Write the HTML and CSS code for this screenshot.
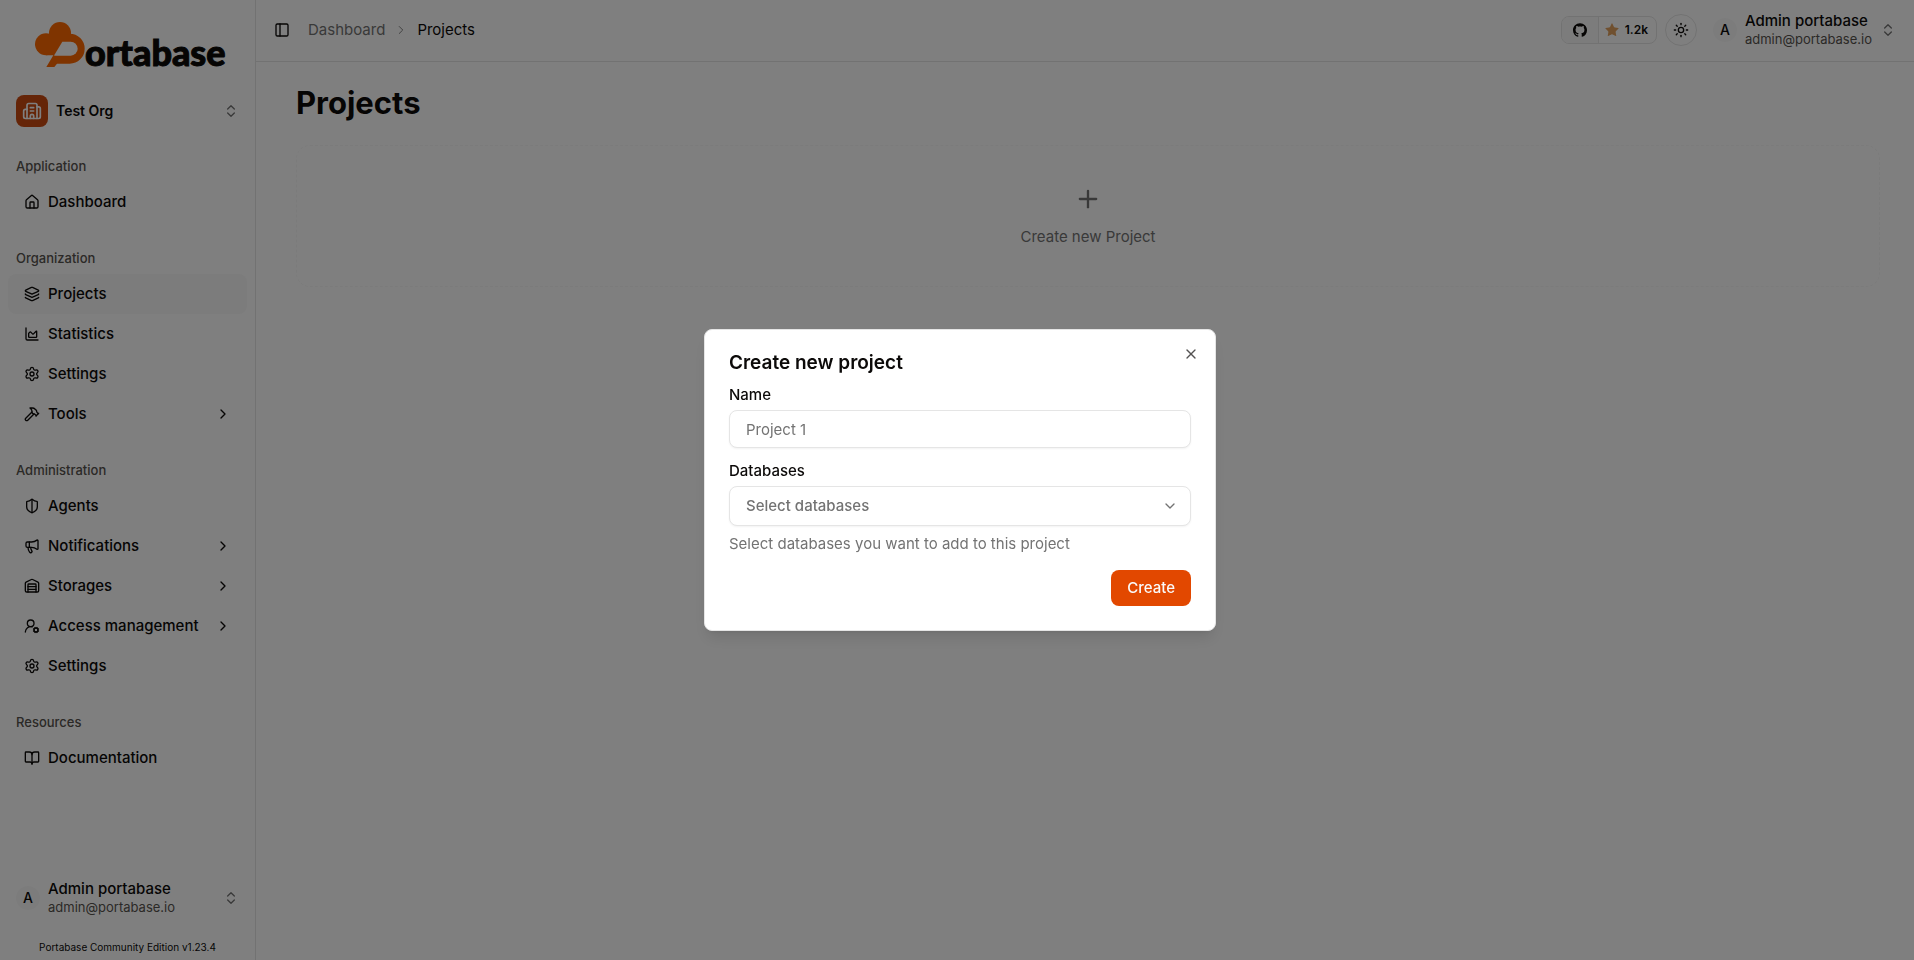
FILE: index.html
```
<!DOCTYPE html>
<html lang="en">
<head>
    <meta charset="UTF-8">
    <meta name="viewport" content="width=device-width, initial-scale=1.0">
    <title>Projects - Portabase</title>
    <link rel="stylesheet" href="styles.css">
</head>
<body>
    <!-- icon sprite -->
    <svg class="sprite" aria-hidden="true">
        <symbol id="i-house" viewBox="0 0 24 24"><path d="M15 21v-8a1 1 0 0 0-1-1h-4a1 1 0 0 0-1 1v8"/><path d="M3 10a2 2 0 0 1 .709-1.528l7-6a2 2 0 0 1 2.582 0l7 6A2 2 0 0 1 21 10v9a2 2 0 0 1-2 2H5a2 2 0 0 1-2-2z"/></symbol>
        <symbol id="i-layers" viewBox="0 0 24 24"><path d="M12.83 2.18a2 2 0 0 0-1.66 0L2.6 6.08a1 1 0 0 0 0 1.83l8.58 3.91a2 2 0 0 0 1.66 0l8.58-3.9a1 1 0 0 0 0-1.83z"/><path d="M2 12a1 1 0 0 0 .58.91l8.6 3.91a2 2 0 0 0 1.65 0l8.58-3.9A1 1 0 0 0 22 12"/><path d="M2 17a1 1 0 0 0 .58.91l8.6 3.91a2 2 0 0 0 1.65 0l8.58-3.9A1 1 0 0 0 22 17"/></symbol>
        <symbol id="i-chart" viewBox="0 0 24 24"><path d="M3 3v16a2 2 0 0 0 2 2h16"/><path d="M7 11.207a.5.5 0 0 1 .146-.353l2-2a.5.5 0 0 1 .708 0l3.292 3.292a.5.5 0 0 0 .708 0l4.292-4.292a.5.5 0 0 1 .854.353V16a1 1 0 0 1-1 1H8a1 1 0 0 1-1-1z"/></symbol>
        <symbol id="i-settings" viewBox="0 0 24 24"><path d="M9.671 4.136a2.34 2.34 0 0 1 4.659 0 2.34 2.34 0 0 0 3.319 1.915 2.34 2.34 0 0 1 2.33 4.033 2.34 2.34 0 0 0 0 3.831 2.34 2.34 0 0 1-2.33 4.033 2.34 2.34 0 0 0-3.319 1.915 2.34 2.34 0 0 1-4.659 0 2.34 2.34 0 0 0-3.32-1.915 2.34 2.34 0 0 1-2.33-4.033 2.34 2.34 0 0 0 0-3.831A2.34 2.34 0 0 1 6.35 6.051a2.34 2.34 0 0 0 3.319-1.915"/><circle cx="12" cy="12" r="3"/></symbol>
        <symbol id="i-hammer" viewBox="0 0 24 24"><path d="m15 12-9.373 9.373a1 1 0 0 1-3.001-3L12 9"/><path d="m18 15 4-4"/><path d="m21.5 11.5-1.914-1.914A2 2 0 0 1 19 8.172v-.344a2 2 0 0 0-.586-1.414l-1.657-1.657A6 6 0 0 0 12.516 3H9l1.243 1.243A6 6 0 0 1 12 8.485V10l2 2h1.172a2 2 0 0 1 1.414.586L18.5 14.5"/></symbol>
        <symbol id="i-shield" viewBox="0 0 24 24"><path d="M20 13c0 5-3.5 7.5-7.66 8.95a1 1 0 0 1-.67-.01C7.5 20.5 4 18 4 13V6a1 1 0 0 1 1-1c2 0 4.5-1.2 6.24-2.72a1.17 1.17 0 0 1 1.52 0C14.51 3.81 17 5 19 5a1 1 0 0 1 1 1z"/><path d="M12 22V2"/></symbol>
        <symbol id="i-megaphone" viewBox="0 0 24 24"><path d="M11 6a13 13 0 0 0 8.4-2.8A1 1 0 0 1 21 4v12a1 1 0 0 1-1.6.8A13 13 0 0 0 11 14H5a2 2 0 0 1-2-2V8a2 2 0 0 1 2-2z"/><path d="M6 14a12 12 0 0 0 2.4 7.2 2 2 0 0 0 3.2-2.4A8 8 0 0 1 10 14"/><path d="M8 6v8"/></symbol>
        <symbol id="i-warehouse" viewBox="0 0 24 24"><path d="M18 21V10a1 1 0 0 0-1-1H7a1 1 0 0 0-1 1v11"/><path d="M22 19a2 2 0 0 1-2 2H4a2 2 0 0 1-2-2V8a2 2 0 0 1 1.132-1.803l7.95-3.974a2 2 0 0 1 1.837 0l7.948 3.974A2 2 0 0 1 22 8z"/><path d="M6 13h12"/><path d="M6 17h12"/></symbol>
        <symbol id="i-user-cog" viewBox="0 0 24 24"><path d="m14.305 19.53.923-.382"/><path d="m15.228 16.852-.923-.383"/><path d="m16.852 15.228-.383-.923"/><path d="m16.852 20.772-.383.924"/><path d="m19.148 15.228.383-.923"/><path d="m19.53 21.696-.382-.924"/><path d="m20.772 16.852.924-.383"/><path d="m20.772 19.148.924.383"/><path d="M2 21a8 8 0 0 1 10.434-7.62"/><circle cx="10" cy="8" r="5"/><circle cx="18" cy="18" r="3"/></symbol>
        <symbol id="i-book" viewBox="0 0 24 24"><path d="M12 7v14"/><path d="M3 18a1 1 0 0 1-1-1V4a1 1 0 0 1 1-1h5a4 4 0 0 1 4 4 4 4 0 0 1 4-4h5a1 1 0 0 1 1 1v13a1 1 0 0 1-1 1h-6a3 3 0 0 0-3 3 3 3 0 0 0-3-3z"/></symbol>
        <symbol id="i-building" viewBox="0 0 24 24"><path d="M10 12h4"/><path d="M10 8h4"/><path d="M14 21v-3a2 2 0 0 0-4 0v3"/><path d="M6 10H4a2 2 0 0 0-2 2v7a2 2 0 0 0 2 2h16a2 2 0 0 0 2-2V9a2 2 0 0 0-2-2h-2"/><path d="M6 21V5a2 2 0 0 1 2-2h8a2 2 0 0 1 2 2v16"/></symbol>
        <symbol id="i-updown" viewBox="0 0 24 24"><path d="m7 15 5 5 5-5"/><path d="m7 9 5-5 5 5"/></symbol>
        <symbol id="i-right" viewBox="0 0 24 24"><path d="m9 18 6-6-6-6"/></symbol>
        <symbol id="i-down" viewBox="0 0 24 24"><path d="m6 9 6 6 6-6"/></symbol>
        <symbol id="i-panel" viewBox="0 0 24 24"><rect width="18" height="18" x="3" y="3" rx="2"/><path d="M9 3v18"/></symbol>
        <symbol id="i-sun" viewBox="0 0 24 24"><circle cx="12" cy="12" r="4"/><path d="M12 2v2"/><path d="M12 20v2"/><path d="m4.93 4.93 1.41 1.41"/><path d="m17.66 17.66 1.41 1.41"/><path d="M2 12h2"/><path d="M20 12h2"/><path d="m6.34 17.66-1.41 1.41"/><path d="m19.07 4.93-1.41 1.41"/></symbol>
        <symbol id="i-plus" viewBox="0 0 24 24"><path d="M5 12h14"/><path d="M12 5v14"/></symbol>
        <symbol id="i-x" viewBox="0 0 24 24"><path d="M18 6 6 18"/><path d="m6 6 12 12"/></symbol>
        <symbol id="i-github" viewBox="0 0 24 24"><path d="M12 .297c-6.63 0-12 5.373-12 12 0 5.303 3.438 9.8 8.205 11.385.6.113.82-.258.82-.577 0-.285-.01-1.04-.015-2.04-3.338.724-4.042-1.61-4.042-1.61C4.422 18.07 3.633 17.7 3.633 17.7c-1.087-.744.084-.729.084-.729 1.205.084 1.838 1.236 1.838 1.236 1.07 1.835 2.809 1.305 3.495.998.108-.776.417-1.305.76-1.605-2.665-.3-5.466-1.332-5.466-5.93 0-1.31.465-2.38 1.235-3.22-.135-.303-.54-1.523.105-3.176 0 0 1.005-.322 3.3 1.23.96-.267 1.98-.399 3-.405 1.02.006 2.04.138 3 .405 2.28-1.552 3.285-1.23 3.285-1.23.645 1.653.24 2.873.12 3.176.765.84 1.23 1.91 1.23 3.22 0 4.61-2.805 5.625-5.475 5.92.42.36.81 1.096.81 2.22 0 1.606-.015 2.896-.015 3.286 0 .315.21.69.825.57C20.565 22.092 24 17.592 24 12.297c0-6.627-5.373-12-12-12"/></symbol>
        <symbol id="i-star" viewBox="0 0 24 24"><path d="M11.525 2.295a.53.53 0 0 1 .95 0l2.31 4.679a2.12 2.12 0 0 0 1.595 1.16l5.166.756a.53.53 0 0 1 .294.904l-3.736 3.638a2.12 2.12 0 0 0-.611 1.878l.882 5.14a.53.53 0 0 1-.771.56l-4.618-2.428a2.12 2.12 0 0 0-1.973 0L6.396 21.01a.53.53 0 0 1-.77-.56l.881-5.139a2.12 2.12 0 0 0-.611-1.879L2.16 9.795a.53.53 0 0 1 .294-.906l5.165-.755a2.12 2.12 0 0 0 1.597-1.16z"/></symbol>
    </svg>

    <div class="app">
        <aside class="sidebar">
            <a class="logo" href="#" aria-label="Portabase">
                <svg class="logo-mark" viewBox="0 0 150 135">
                    <circle cx="75" cy="33" r="33"/>
                    <circle cx="33" cy="67" r="33"/>
                    <path d="M33 100H55L34 135H58L66 125H104A45 45 0 0 0 104 35H75L33 67Z"/>
                    <path class="logo-hole" d="M58 99L82 59H107A20 20 0 0 1 107 101H58Z"/>
                </svg>
                <span class="logo-text">ortabase</span>
            </a>

            <button class="org" type="button">
                <span class="org-icon"><svg class="icon"><use href="#i-building"/></svg></span>
                <span class="org-name">Test Org</span>
                <svg class="icon muted"><use href="#i-updown"/></svg>
            </button>

            <nav class="menu">
                <section class="group">
                    <h2 class="group-label">Application</h2>
                    <a class="item" href="#"><svg class="icon"><use href="#i-house"/></svg>Dashboard</a>
                </section>
                <section class="group">
                    <h2 class="group-label">Organization</h2>
                    <a class="item active" href="#"><svg class="icon"><use href="#i-layers"/></svg>Projects</a>
                    <a class="item" href="#"><svg class="icon"><use href="#i-chart"/></svg>Statistics</a>
                    <a class="item" href="#"><svg class="icon"><use href="#i-settings"/></svg>Settings</a>
                    <button class="item" type="button"><svg class="icon"><use href="#i-hammer"/></svg>Tools<svg class="icon caret"><use href="#i-right"/></svg></button>
                </section>
                <section class="group">
                    <h2 class="group-label">Administration</h2>
                    <a class="item" href="#"><svg class="icon"><use href="#i-shield"/></svg>Agents</a>
                    <button class="item" type="button"><svg class="icon"><use href="#i-megaphone"/></svg>Notifications<svg class="icon caret"><use href="#i-right"/></svg></button>
                    <button class="item" type="button"><svg class="icon"><use href="#i-warehouse"/></svg>Storages<svg class="icon caret"><use href="#i-right"/></svg></button>
                    <button class="item" type="button"><svg class="icon"><use href="#i-user-cog"/></svg>Access management<svg class="icon caret"><use href="#i-right"/></svg></button>
                    <a class="item" href="#"><svg class="icon"><use href="#i-settings"/></svg>Settings</a>
                </section>
                <section class="group">
                    <h2 class="group-label">Resources</h2>
                    <a class="item" href="#"><svg class="icon"><use href="#i-book"/></svg>Documentation</a>
                </section>
            </nav>

            <footer class="sidebar-footer">
                <button class="user" type="button">
                    <span class="avatar">A</span>
                    <span class="user-text">
                        <span class="user-name">Admin portabase</span>
                        <span class="user-mail">admin@portabase.io</span>
                    </span>
                    <svg class="icon muted"><use href="#i-updown"/></svg>
                </button>
                <p class="version">Portabase Community Edition v1.23.4</p>
            </footer>
        </aside>

        <div class="page">
            <header class="topbar">
                <button class="toggle" type="button" aria-label="Toggle sidebar"><svg class="icon"><use href="#i-panel"/></svg></button>
                <nav class="crumbs" aria-label="Breadcrumb">
                    <a href="#">Dashboard</a>
                    <svg class="icon small"><use href="#i-right"/></svg>
                    <span class="current">Projects</span>
                </nav>
                <div class="actions">
                    <a class="stars" href="#">
                        <span class="stars-github"><svg class="icon solid"><use href="#i-github"/></svg></span>
                        <span class="stars-count"><svg class="icon solid star"><use href="#i-star"/></svg>1.2k</span>
                    </a>
                    <button class="theme" type="button" aria-label="Toggle theme"><svg class="icon"><use href="#i-sun"/></svg></button>
                    <button class="user" type="button">
                        <span class="avatar">A</span>
                        <span class="user-text">
                            <span class="user-name">Admin portabase</span>
                            <span class="user-mail">admin@portabase.io</span>
                        </span>
                        <svg class="icon muted"><use href="#i-updown"/></svg>
                    </button>
                </div>
            </header>

            <main class="content">
                <h1>Projects</h1>
                <button class="new-card" type="button">
                    <svg class="icon"><use href="#i-plus"/></svg>
                    Create new Project
                </button>
            </main>
        </div>
    </div>

    <div class="overlay">
        <dialog class="dialog" open aria-labelledby="dialog-title">
            <h2 id="dialog-title">Create new project</h2>
            <form class="form">
                <div class="field">
                    <label for="name">Name</label>
                    <input id="name" type="text" placeholder="Project 1">
                </div>
                <div class="field">
                    <label for="databases">Databases</label>
                    <div class="select">
                        <select id="databases">
                            <option>Select databases</option>
                        </select>
                        <svg class="icon"><use href="#i-down"/></svg>
                    </div>
                    <p class="help">Select databases you want to add to this project</p>
                </div>
                <button class="submit" type="submit">Create</button>
            </form>
            <button class="close" type="button" aria-label="Close"><svg class="icon"><use href="#i-x"/></svg></button>
        </dialog>
    </div>
</body>
</html>
```
FILE: styles.css
```
:root {
    --bg: #ffffff;
    --fg: #0c0a09;
    --muted: #737373;
    --border: #e5e5e5;
    --accent: #f9f9f9;
    --primary: #e24800;
}

* {
    box-sizing: border-box;
}

body {
    margin: 0;
    background: var(--bg);
    color: var(--fg);
    font-family: Inter, "Open Sans", sans-serif;
    font-size: 15px;
    line-height: 20px;
}

h1, h2, p {
    margin: 0;
}

a {
    color: inherit;
    text-decoration: none;
}

button, input, select {
    font: inherit;
    color: inherit;
}

button {
    border: 0;
    padding: 0;
    background: none;
    cursor: pointer;
}

.sprite {
    display: none;
}

.icon {
    width: 16px;
    height: 16px;
    flex-shrink: 0;
    fill: none;
    stroke: currentColor;
    stroke-width: 2;
    stroke-linecap: round;
    stroke-linejoin: round;
}

.icon.solid {
    width: 14px;
    height: 14px;
    fill: currentColor;
    stroke: none;
}

.icon.muted {
    color: var(--muted);
}

.icon.small {
    width: 14px;
    height: 14px;
}

.app {
    display: flex;
    min-height: 100vh;
}

/* sidebar */
.sidebar {
    width: 256px;
    flex-shrink: 0;
    display: flex;
    flex-direction: column;
    border-right: 1px solid var(--border);
}

.logo {
    display: flex;
    align-items: flex-end;
    padding: 22px 16px 0 35px;
    height: 67px;
}

.logo-mark {
    width: 50px;
    height: 45px;
    fill: #ff6900;
}

.logo-mark .logo-hole {
    fill: var(--bg);
}

.logo-text {
    font-family: Lato, sans-serif;
    font-size: 36px;
    font-weight: 900;
    line-height: 30px;
    -webkit-text-stroke: 1px currentColor;
}

.org {
    display: flex;
    align-items: center;
    gap: 8px;
    margin: 20px 8px 7px;
    padding: 8px;
    text-align: left;
}

.org-icon {
    display: flex;
    align-items: center;
    justify-content: center;
    width: 32px;
    height: 32px;
    border-radius: 8px;
    background: #ca4a10;
    color: #ffffff;
}

.org-icon .icon {
    width: 20px;
    height: 20px;
}

.org-name {
    flex: 1;
    font-size: 14px;
    font-weight: 600;
}

.menu {
    flex: 1;
    display: flex;
    flex-direction: column;
    gap: 4px;
}

.group {
    padding: 8px;
}

.group-label {
    padding: 0 8px;
    font-size: 13px;
    font-weight: 500;
    line-height: 32px;
    color: #57534e;
}

.item {
    display: flex;
    align-items: center;
    gap: 8px;
    width: 100%;
    height: 40px;
    padding: 0 16px;
    border-radius: 8px;
    font-weight: 500;
    text-align: left;
}

.item.active {
    background: var(--accent);
}

.item .caret {
    margin-left: auto;
}

.user {
    display: flex;
    align-items: center;
    gap: 8px;
    text-align: left;
}

.avatar {
    width: 24px;
    height: 24px;
    border-radius: 50%;
    background: var(--accent);
    font-size: 14px;
    font-weight: 500;
    line-height: 24px;
    text-align: center;
}

.user-text {
    flex: 1;
}

.user-name,
.user-mail {
    display: block;
    line-height: 18px;
}

.user-name {
    font-weight: 500;
}

.user-mail {
    font-size: 13px;
    color: #57534e;
}

.sidebar-footer .user {
    width: 100%;
    padding: 0 16px;
}

.version {
    padding: 22px 8px 4px;
    font-size: 10px;
    line-height: 18px;
    text-align: center;
}

/* top bar */
.page {
    flex: 1;
    min-width: 0;
}

.topbar {
    display: flex;
    align-items: center;
    height: 62px;
    padding: 0 18px 1px;
    border-bottom: 1px solid var(--border);
}

.toggle {
    display: flex;
}

.crumbs {
    display: flex;
    align-items: center;
    gap: 9px;
    margin-left: 18px;
    color: var(--muted);
}

.crumbs .icon {
    stroke-width: 1.5;
}

.crumbs .current {
    color: var(--fg);
}

.actions {
    display: flex;
    align-items: center;
    margin-left: auto;
}

.stars {
    display: flex;
    height: 28px;
    border: 1px solid var(--border);
    border-radius: 8px;
    font-size: 12px;
    font-weight: 600;
    overflow: hidden;
}

.stars-github,
.stars-count {
    display: flex;
    align-items: center;
    gap: 5px;
}

.stars-github {
    padding: 0 11px;
    border-right: 1px solid var(--border);
    background: var(--accent);
}

.stars-count {
    padding: 0 8px 0 5px;
}

.stars-count .star {
    width: 16px;
    height: 16px;
    color: #e0a15e;
}

.theme {
    display: flex;
    align-items: center;
    justify-content: center;
    width: 32px;
    height: 32px;
    margin: 0 16px 0 8px;
    border: 1px solid var(--border);
    border-radius: 50%;
}

/* content */
.content {
    padding: 21px 34px 40px 40px;
}

h1 {
    font-size: 31px;
    font-weight: 700;
    line-height: 40px;
}

.new-card {
    display: flex;
    flex-direction: column;
    align-items: center;
    justify-content: center;
    gap: 14px;
    width: 100%;
    height: 142px;
    margin-top: 22px;
    border: 1px dashed #f7f7f7;
    border-radius: 14px;
    color: var(--muted);
}

.new-card .icon {
    width: 28px;
    height: 28px;
    stroke-width: 2;
}

/* dialog */
.overlay {
    position: fixed;
    inset: 0;
    display: flex;
    align-items: center;
    justify-content: center;
    padding-left: 6px;
    background: rgba(0, 0, 0, 0.5);
}

.dialog {
    position: relative;
    width: 512px;
    max-width: 100%;
    margin: 0;
    padding: 24px;
    border: 1px solid var(--border);
    border-radius: 8px;
    background: var(--bg);
    color: var(--fg);
    box-shadow: 0 10px 15px -3px rgba(0, 0, 0, 0.1), 0 4px 6px -4px rgba(0, 0, 0, 0.1);
}

.dialog h2 {
    font-size: 19px;
    font-weight: 600;
    line-height: 18px;
}

.form {
    display: flex;
    flex-direction: column;
    gap: 16px;
    margin-top: 16px;
}

.field {
    display: flex;
    flex-direction: column;
    gap: 8px;
}

.field label {
    font-weight: 500;
    line-height: 14px;
}

.field input,
.field select {
    width: 100%;
    height: 38px;
    padding: 0 16px;
    border: 1px solid var(--border);
    border-radius: 8px;
    background: var(--bg);
    box-shadow: 0 1px 2px rgba(0, 0, 0, 0.05);
}

.field input::placeholder {
    color: var(--muted);
}

.select {
    position: relative;
}

.field select {
    display: block;
    height: 40px;
    appearance: none;
    font-weight: 500;
    color: var(--muted);
}

.select .icon {
    position: absolute;
    top: 12px;
    right: 13px;
    color: var(--muted);
    pointer-events: none;
}

.help {
    color: var(--muted);
}

.submit {
    align-self: flex-end;
    height: 36px;
    padding: 0 16px;
    border-radius: 8px;
    background: var(--primary);
    color: #fafafa;
    font-weight: 500;
}

.close {
    position: absolute;
    top: 16px;
    right: 16px;
    display: flex;
    opacity: 0.7;
}
```
